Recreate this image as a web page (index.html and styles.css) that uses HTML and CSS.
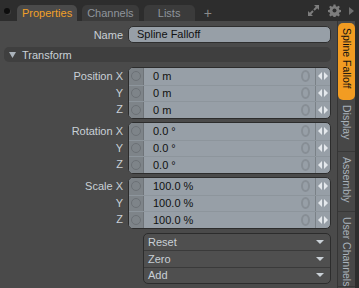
FILE: index.html
```html
<!DOCTYPE html>
<html lang="en">
<head>
  <meta charset="UTF-8" />
  <title>Properties</title>
  <link rel="stylesheet" href="styles.css">
</head>
<body>

<div class="app">
  <!-- Tab bar -->
  <div class="topbar">
    <span class="dot"></span>
    <div class="tab active">Properties</div>
    <div class="tab">Channels</div>
    <div class="tab lists">Lists</div>
    <span class="plus">+</span>
    <div class="tools">
      <svg width="13" height="13" viewBox="0 0 13 13">
        <path d="M7 1h5v5l-1.8-1.8-2.5 2.5-1.4-1.4 2.5-2.5z M6 12H1V7l1.8 1.8 2.5-2.5 1.4 1.4-2.5 2.5z" fill="#7d7d7d"/>
      </svg>
      <svg width="13" height="13" viewBox="0 0 13 13">
        <path d="M5.5 0.5h2l.3 1.8 1.2.5 1.5-1.1 1.4 1.4-1.1 1.5.5 1.2 1.8.3v2l-1.8.3-.5 1.2 1.1 1.5-1.4 1.4-1.5-1.1-1.2.5-.3 1.8h-2l-.3-1.8-1.2-.5-1.5 1.1-1.4-1.4 1.1-1.5-.5-1.2-1.8-.3v-2l1.8-.3.5-1.2-1.1-1.5 1.4-1.4 1.5 1.1 1.2-.5z" fill="#7d7d7d"/>
        <circle cx="6.5" cy="6.5" r="2" fill="#2d2d2d"/>
      </svg>
      <svg width="5" height="8" viewBox="0 0 5 8"><path d="M0 0l5 4-5 4z" fill="#6f6f6f"/></svg>
    </div>
  </div>

  <div class="main">
    <div class="panel">
      <div class="name-row">
        <span class="label">Name</span>
        <div class="name-input">Spline Falloff</div>
      </div>

      <div class="section">
        <svg width="7" height="6" viewBox="0 0 7 6"><path d="M0 0h7L3.5 6z" fill="#aab2ba"/></svg>
        Transform
      </div>

      <!-- Position -->
      <div class="group">
        <div class="labels">
          <span>Position X</span><span>Y</span><span>Z</span>
        </div>
        <div class="box">
          <div class="row"><span class="key"><i></i></span><span class="value">0 m</span><span class="ring"></span><span class="arrows"><svg width="10" height="8" viewBox="0 0 10 8"><path d="M4 0v8L0 4z M6 0v8l4-4z" fill="#e4e8ec"/></svg></span></div>
          <div class="row"><span class="key"><i></i></span><span class="value">0 m</span><span class="ring"></span><span class="arrows"><svg width="10" height="8" viewBox="0 0 10 8"><path d="M4 0v8L0 4z M6 0v8l4-4z" fill="#e4e8ec"/></svg></span></div>
          <div class="row"><span class="key"><i></i></span><span class="value">0 m</span><span class="ring"></span><span class="arrows"><svg width="10" height="8" viewBox="0 0 10 8"><path d="M4 0v8L0 4z M6 0v8l4-4z" fill="#e4e8ec"/></svg></span></div>
        </div>
      </div>

      <!-- Rotation -->
      <div class="group">
        <div class="labels">
          <span>Rotation X</span><span>Y</span><span>Z</span>
        </div>
        <div class="box">
          <div class="row"><span class="key"><i></i></span><span class="value">0.0 °</span><span class="ring"></span><span class="arrows"><svg width="10" height="8" viewBox="0 0 10 8"><path d="M4 0v8L0 4z M6 0v8l4-4z" fill="#e4e8ec"/></svg></span></div>
          <div class="row"><span class="key"><i></i></span><span class="value">0.0 °</span><span class="ring"></span><span class="arrows"><svg width="10" height="8" viewBox="0 0 10 8"><path d="M4 0v8L0 4z M6 0v8l4-4z" fill="#e4e8ec"/></svg></span></div>
          <div class="row"><span class="key"><i></i></span><span class="value">0.0 °</span><span class="ring"></span><span class="arrows"><svg width="10" height="8" viewBox="0 0 10 8"><path d="M4 0v8L0 4z M6 0v8l4-4z" fill="#e4e8ec"/></svg></span></div>
        </div>
      </div>

      <!-- Scale -->
      <div class="group">
        <div class="labels">
          <span>Scale X</span><span>Y</span><span>Z</span>
        </div>
        <div class="box">
          <div class="row"><span class="key"><i></i></span><span class="value">100.0 %</span><span class="ring"></span><span class="arrows"><svg width="10" height="8" viewBox="0 0 10 8"><path d="M4 0v8L0 4z M6 0v8l4-4z" fill="#e4e8ec"/></svg></span></div>
          <div class="row"><span class="key"><i></i></span><span class="value">100.0 %</span><span class="ring"></span><span class="arrows"><svg width="10" height="8" viewBox="0 0 10 8"><path d="M4 0v8L0 4z M6 0v8l4-4z" fill="#e4e8ec"/></svg></span></div>
          <div class="row"><span class="key"><i></i></span><span class="value">100.0 %</span><span class="ring"></span><span class="arrows"><svg width="10" height="8" viewBox="0 0 10 8"><path d="M4 0v8L0 4z M6 0v8l4-4z" fill="#e4e8ec"/></svg></span></div>
        </div>
      </div>

      <div class="actions">
        <div class="action">Reset<span class="drop"></span></div>
        <div class="action">Zero<span class="drop"></span></div>
        <div class="action">Add<span class="drop"></span></div>
      </div>
    </div>

    <!-- Side tabs -->
    <div class="sidetabs">
      <div class="vtab active">Spline Falloff</div>
      <div class="vtab display">Display</div>
      <div class="vtab assembly">Assembly</div>
      <div class="vtab">User Channels</div>
    </div>
  </div>
</div>

</body>
</html>
```

FILE: styles.css
```css
html, body {
  margin: 0;
  padding: 0;
  background-color: #2d2d2d;
  font-family: "Liberation Sans", Arial, sans-serif;
  font-size: 11px;
}
.app {
  width: 359px;
  height: 288px;
  overflow: hidden;
  display: flex;
  flex-direction: column;
}

/* top tab bar */
.topbar {
  height: 21px;
  flex-shrink: 0;
  display: flex;
  align-items: flex-end;
  background-color: #2d2d2d;
  box-sizing: border-box;
}
.dot {
  width: 6px;
  height: 6px;
  border-radius: 50%;
  background-color: #0d0d0d;
  box-shadow: 1px 1px 0 #3c3c3c;
  margin: 0 7px 7px 4px;
}
.tab {
  height: 16px;
  line-height: 16px;
  padding: 0 5px;
  margin-right: 5px;
  border-radius: 5px 5px 0 0;
  background-color: #3b3b3b;
  color: #8f959b;
}
.tab.active {
  background-color: #4a4a4a;
  color: #f0a028;
}
.tab.lists {
  width: 51px;
  box-sizing: border-box;
  text-align: center;
}
.plus {
  color: #8a8a8a;
  font-size: 14px;
  line-height: 16px;
  margin-left: 4px;
}
.tools {
  margin-left: auto;
  display: flex;
  align-items: center;
  gap: 8px;
  height: 21px;
  padding-right: 5px;
}

/* main area */
.main {
  flex: 1;
  display: flex;
  min-height: 0;
}
.panel {
  width: 337px;
  flex-shrink: 0;
  background-color: #4a4a4a;
  padding: 5px 6px 0 0;
  box-sizing: border-box;
}
.name-row {
  display: flex;
  align-items: center;
  gap: 5px;
}
.label, .labels span {
  color: #c9d0d6;
}
.name-row .label {
  width: 123px;
  text-align: right;
}
.name-input {
  flex: 1;
  height: 17px;
  line-height: 15px;
  box-sizing: border-box;
  border: 1px solid #2f2f2f;
  border-radius: 5px;
  background-color: #979fa7;
  color: #111;
  padding-left: 8px;
}

.section {
  margin: 4px 0 0 4px;
  height: 15px;
  display: flex;
  align-items: center;
  gap: 6px;
  padding-left: 5px;
  background-color: #3f3f3f;
  border-radius: 5px;
  color: #c9d0d6;
}

.group {
  display: flex;
  gap: 5px;
  margin-top: 3px;
}
.section + .group {
  margin-top: 5px;
}
.labels {
  width: 123px;
  display: grid;
  grid-template-rows: repeat(3, 1fr);
  text-align: right;
  padding: 1px 0;
}
.labels span {
  line-height: 16px;
}
.box {
  flex: 1;
  height: 50px;
  border: 1px solid #2c2c2c;
  border-radius: 5px;
  overflow: hidden;
  display: grid;
  grid-template-rows: repeat(3, 1fr);
  background-color: #979fa7;
}
.row {
  display: flex;
  align-items: center;
  border-top: 1px solid #8d959c;
}
.row:first-child {
  border-top: none;
}
.key {
  width: 14px;
  height: 100%;
  background-color: #7e8489;
  border-right: 1px solid #6e7378;
  display: flex;
  align-items: center;
  justify-content: center;
}
.key i {
  width: 8px;
  height: 8px;
  border-radius: 50%;
  border: 1px solid #6c7176;
}
.value {
  flex: 1;
  padding-left: 9px;
  color: #111;
}
.ring {
  width: 5px;
  height: 8px;
  border: 2px solid #878e95;
  border-radius: 50%;
  margin-right: 5px;
}
.arrows {
  width: 14px;
  height: 100%;
  border-left: 1px solid #7a8187;
  display: flex;
  align-items: center;
  justify-content: center;
}

.actions {
  margin: 4px 0 0 143px;
  height: 51px;
  border: 1px solid #2c2c2c;
  border-radius: 5px;
  overflow: hidden;
  display: grid;
  grid-template-rows: repeat(3, 1fr);
  background-color: #4f4f4f;
  box-sizing: border-box;
}
.action {
  display: flex;
  align-items: center;
  padding: 0 6px 0 4px;
  color: #c9d0d6;
  border-top: 1px solid #3a3a3a;
}
.action:first-child {
  border-top: none;
}
.drop {
  margin-left: auto;
  width: 0;
  height: 0;
  border-left: 4px solid transparent;
  border-right: 4px solid transparent;
  border-top: 4px solid #c9d0d6;
}

/* vertical tabs */
.sidetabs {
  flex: 1;
  display: flex;
  flex-direction: column;
  padding-top: 2px;
  background-color: #474747;
  border-left: 1px solid #353535;
  border-right: 4px solid #2d2d2d;
  overflow: hidden;
}
.vtab {
  writing-mode: vertical-rl;
  white-space: nowrap;
  flex-shrink: 0;
  box-sizing: border-box;
  padding-top: 5px;
  color: #a9b2bb;
  font-size: 10.5px;
  line-height: 17px;
  border-bottom: 1px solid #383838;
}
.vtab.active {
  height: 77px;
  background-color: #f29c22;
  color: #111;
  border-radius: 5px;
  border-bottom: none;
}
.vtab.display {
  height: 52px;
}
.vtab.assembly {
  height: 60px;
}
```
